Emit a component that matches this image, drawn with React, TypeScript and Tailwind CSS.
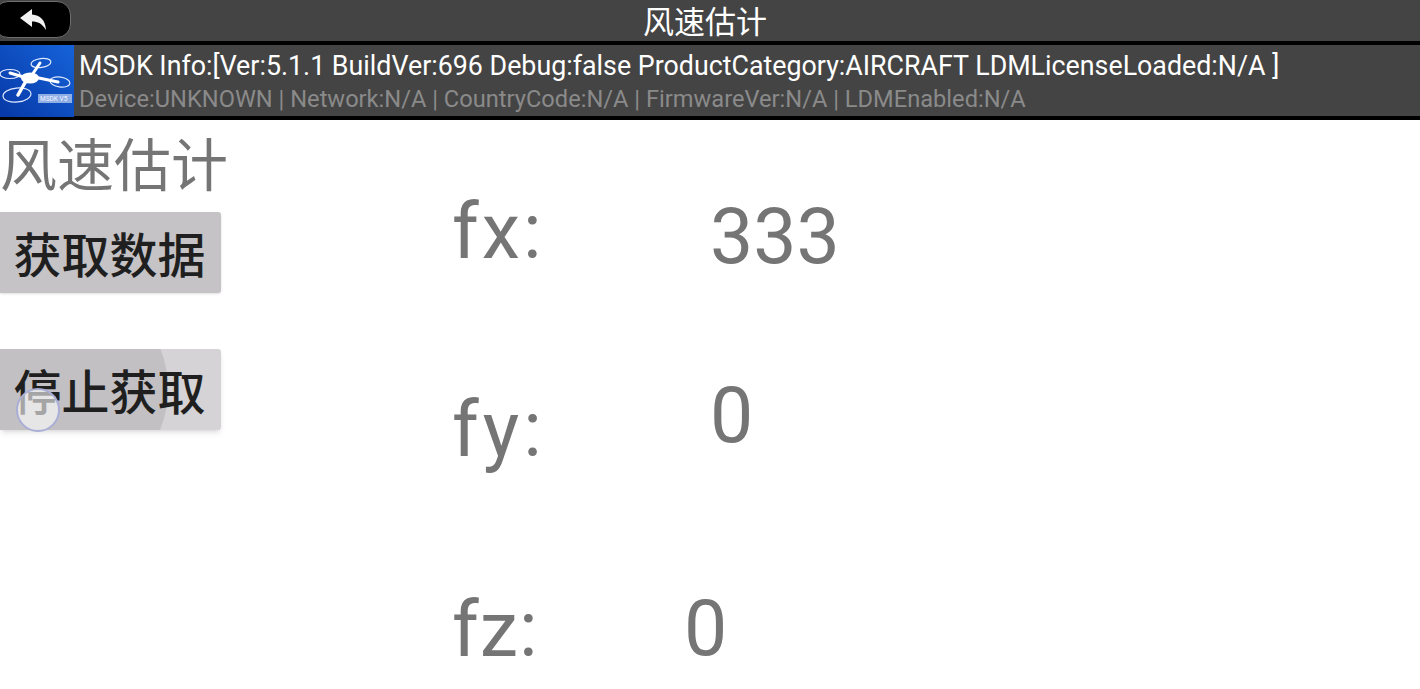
function DroneLogo() {
  return (
    <svg viewBox="0 0 74 72" className="h-[72px] w-[74px] shrink-0">
      <defs>
        <linearGradient id="logoBg" x1="1" y1="0" x2="0" y2="1">
          <stop offset="0" stopColor="#1563d9" />
          <stop offset="1" stopColor="#0738a6" />
        </linearGradient>
      </defs>
      <rect width="74" height="72" fill="url(#logoBg)" />
      <g fill="none" stroke="#dfe9ff" strokeWidth="1.200">
        <ellipse cx="41" cy="18" rx="10" ry="4.500" transform="rotate(-8 41 18)" />
        <ellipse cx="10" cy="29" rx="10" ry="4.500" />
        <ellipse cx="60" cy="37" rx="10" ry="5" transform="rotate(8 60 37)" />
        <ellipse cx="17" cy="50" rx="14" ry="7" transform="rotate(-6 17 50)" />
      </g>
      <g stroke="#fff" strokeLinecap="round" fill="none">
        <path d="M40 18 L32 30" strokeWidth="3" />
        <path d="M10 28 L27 33" strokeWidth="3" />
        <path d="M34 32 L58 37" strokeWidth="3" />
        <path d="M26 36 L18 50" strokeWidth="3.500" />
      </g>
      <ellipse cx="30" cy="33" rx="9" ry="5.500" fill="#fff" />
      <rect x="38" y="49" width="34" height="9" fill="#8faee6" />
      <text x="40" y="56" fontSize="6.500" fill="#eef3fd" fontFamily="Roboto, sans-serif">MSDK V5</text>
    </svg>
  )
}

export default function App() {
  return (
    <div className="h-[689px] w-[1420px] overflow-hidden bg-white font-['Roboto','Noto_Sans_CJK_SC',sans-serif]">
      <div className="relative flex h-[41px] items-center justify-center bg-[#444444] pr-[10px] pt-[3px]">
        <button className="absolute -left-[6px] top-[1px] flex h-[37px] w-[77px] items-center justify-center rounded-[14px] border border-[#6e6e6e] bg-black text-white">
          <svg viewBox="0 0 28 24" className="h-[24px] w-[28px]">
            <path d="M1 10 L13 1 L13 6.500 C21 7 26.500 12 27 22 C23 15.500 19 13.500 13 13.500 L13 19 Z" fill="#f2f2f2" />
          </svg>
        </button>
        <span className="text-[31px] leading-none text-white">风速估计</span>
      </div>

      <div className="flex h-[79px] items-center border-y-[4px] border-black bg-[#444444]">
        <DroneLogo />
        <div className="ml-[5px] flex flex-col pt-[2px]">
          <span className="whitespace-nowrap text-[26.800px] leading-[34px] text-white">
            MSDK Info:[Ver:5.1.1 BuildVer:696 Debug:false ProductCategory:AIRCRAFT LDMLicenseLoaded:N/A ]
          </span>
          <span className="whitespace-nowrap text-[23.650px] leading-[32px] text-[#8a8a8a]">
            Device:UNKNOWN | Network:N/A | CountryCode:N/A | FirmwareVer:N/A | LDMEnabled:N/A
          </span>
        </div>
      </div>

      <div className="flex">
        <div className="flex w-[452px] shrink-0 flex-col items-start">
          <h1 className="mt-[15px] text-[57px] font-normal leading-[64px] text-[#757575]">风速估计</h1>
          <button className="mt-[13px] flex h-[81px] w-[221px] items-center justify-center rounded-r-[3px] bg-[#c5c3c6] pt-[2px] pr-[2px] text-[48px] font-medium leading-none text-[#1f1f1f] shadow-sm">
            <span className="mt-[6px]">获取数据</span>
          </button>
          <div className="relative mt-[56px]">
            <button className="relative flex h-[81px] w-[221px] items-center justify-center overflow-hidden rounded-r-[3px] bg-[#d5d3d6] pr-[2px] text-[48px] font-medium leading-none text-[#1f1f1f] shadow-md">
              <span className="absolute -left-[56px] -top-[70px] h-[220px] w-[224px] rounded-full bg-[#c2c0c3]" />
              <span className="relative mt-[8px]">停止获取</span>
            </button>
            <span className="absolute left-[16px] top-[39px] h-[44px] w-[44px] rounded-full border-2 border-[#a9aed6] bg-white/60" />
          </div>
        </div>

        <div className="flex flex-col text-[77px] leading-none text-[#757575]">
          <div className="mt-[74px] flex">
            <span className="w-[258px] tracking-[3px]">fx:</span>
            <span className="mt-[5px]">333</span>
          </div>
          <div className="mt-[102px] flex">
            <span className="mt-[14px] w-[258px] tracking-[4px]">fy:</span>
            <span>0</span>
          </div>
          <div className="mt-[122px] flex">
            <span className="mt-[1px] w-[232px] tracking-[1px]">fz:</span>
            <span>0</span>
          </div>
        </div>
      </div>
    </div>
  )
}
